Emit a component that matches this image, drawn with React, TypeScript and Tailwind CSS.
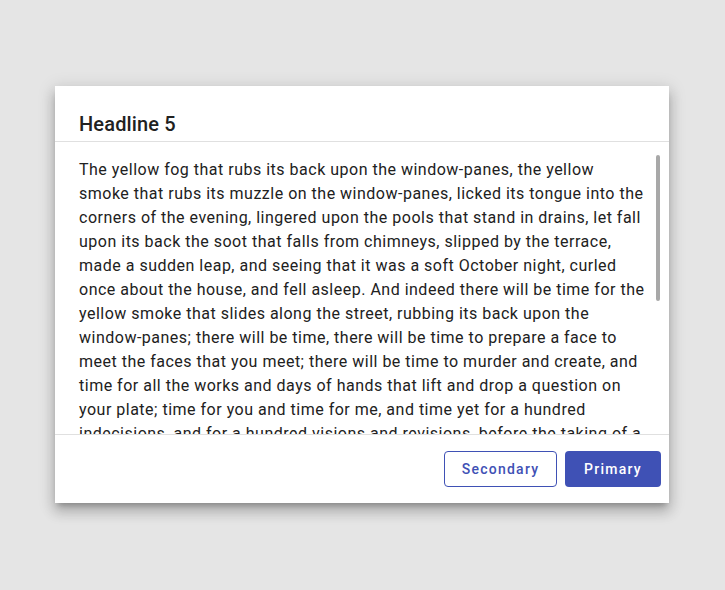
import React from 'react';

const body =
  'The yellow fog that rubs its back upon the window-panes, the yellow smoke that rubs its muzzle on the window-panes, licked its tongue into the corners of the evening, lingered upon the pools that stand in drains, let fall upon its back the soot that falls from chimneys, slipped by the terrace, made a sudden leap, and seeing that it was a soft October night, curled once about the house, and fell asleep. And indeed there will be time for the yellow smoke that slides along the street, rubbing its back upon the window-panes; there will be time, there will be time to prepare a face to meet the faces that you meet; there will be time to murder and create, and time for all the works and days of hands that lift and drop a question on your plate; time for you and time for me, and time yet for a hundred indecisions, and for a hundred visions and revisions, before the taking of a toast and tea.';

export default function App() {
  return (
    <div className="min-h-screen bg-[#e5e5e5] flex items-center justify-center font-['Roboto',sans-serif]">
      <div className="w-[614px] h-[417px] mr-px mb-px bg-white flex flex-col shadow-[0_5px_6px_-3px_rgba(0,0,0,0.25),0_9px_12px_1px_rgba(0,0,0,0.16),0_3px_16px_2px_rgba(0,0,0,0.12)]">
        <div className="h-[56px] px-6 flex items-end pb-[1px] border-b border-[#e0e0e0] shrink-0">
          <h2 className="text-[20px] leading-8 font-medium tracking-[0.15px] text-[#212121]">Headline 5</h2>
        </div>
        <div className="relative flex-1 overflow-hidden border-b border-[#e0e0e0]">
          <p className="px-6 pt-[16px] text-[16px] leading-6 tracking-[0.5px] text-[#212121]">{body}</p>
          <div className="absolute right-[9px] top-[13px] w-[4px] h-[146px] rounded-full bg-[#a8a8a8]" />
        </div>
        <div className="h-[68px] shrink-0 flex items-center justify-end gap-2 px-2">
          <button className="h-9 w-[113px] rounded-[4px] border border-[#3f51b5] text-[#3f51b5] text-[14px] font-medium tracking-[1.25px]">
            Secondary
          </button>
          <button className="h-9 w-[96px] rounded-[4px] bg-[#3f51b5] text-white text-[14px] font-medium tracking-[1.25px]">
            Primary
          </button>
        </div>
      </div>
    </div>
  );
}
